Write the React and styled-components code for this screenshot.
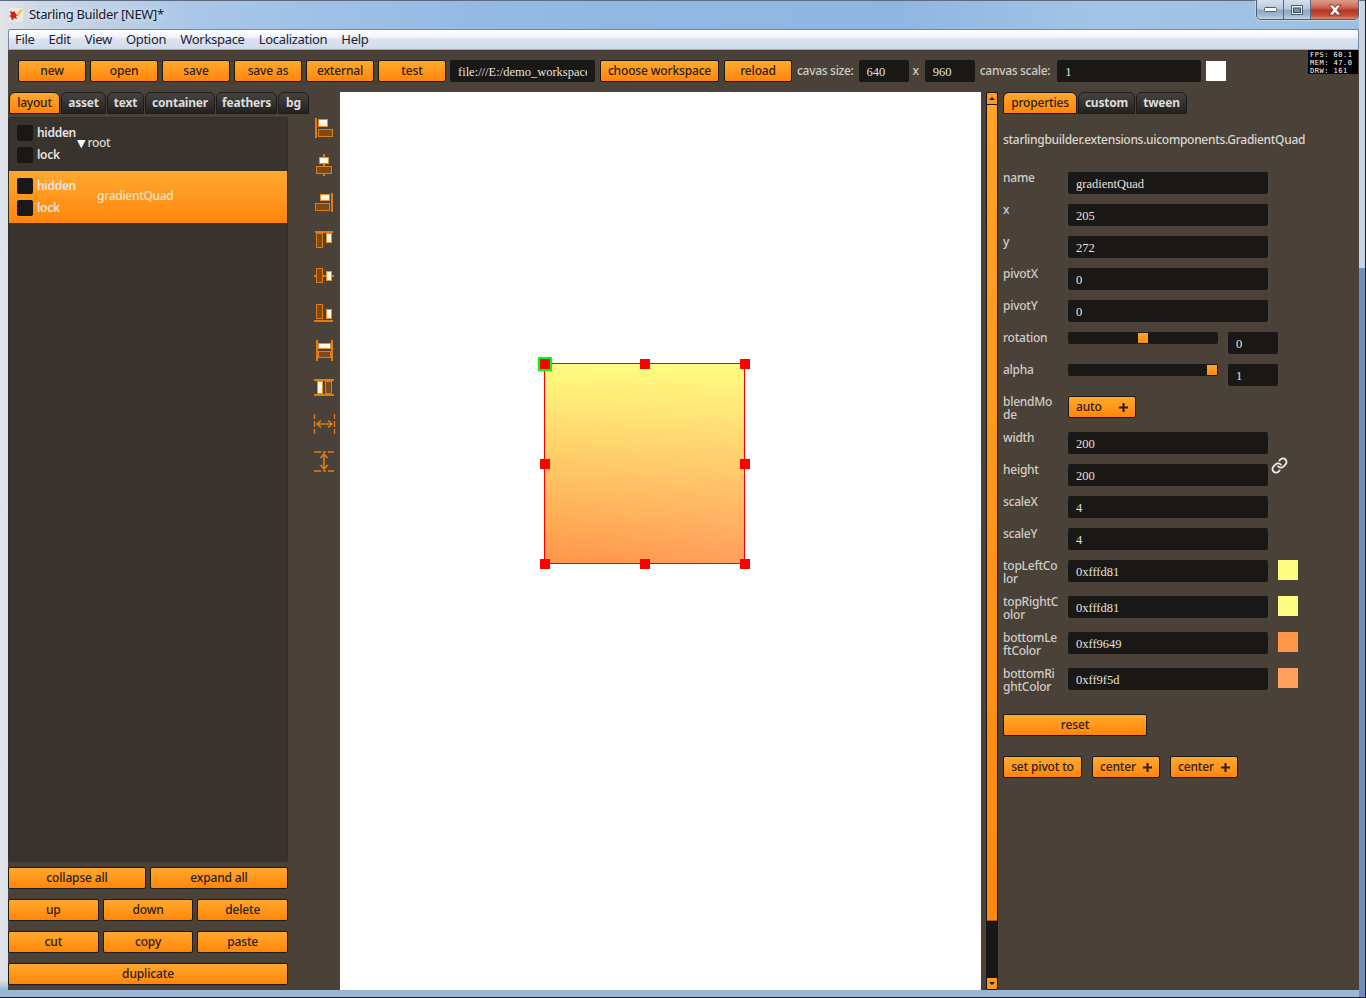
import React from "react";
import styled, { createGlobalStyle } from "styled-components";
import { Link as LinkIcon } from "lucide-react";

const Global = createGlobalStyle`
  html, body { margin: 0; padding: 0; overflow: hidden; background: #a8c3e0; }
  * { box-sizing: border-box; }
`;

const UI = `"Noto Sans", "Open Sans", sans-serif`;

const Frame = styled.div`
  width: 1366px;
  height: 998px;
  display: flex;
  flex-direction: column;
  padding: 0 7px 8px 8px;
  font-family: ${UI};
  box-shadow: inset -1px -1px 0 #1c2026, inset 0 1px 0 #5c6c7e;
  background:
    linear-gradient(to bottom, #c6d4e6 0 268px, #6f8fb8 268px) right 1px top / 6px 100% no-repeat,
    linear-gradient(to bottom, rgba(255,255,255,0) 0, rgba(255,255,255,0) 980px, #9db6d2 990px) 0 0 / 100% 100% no-repeat,
    linear-gradient(90deg, #dfe3e8 0, #cdd8e4 40px, #a8c6e8 200px, #92b9e4 500px, #8fb6e2 900px, #a3c4e6 1100px, #9dbfe2 1366px);
`;

const TitleBar = styled.div`
  height: 29px;
  flex: none;
  display: flex;
  align-items: flex-start;
  margin-left: 1px;
  position: relative;
`;

const AppIcon = styled.svg`
  width: 14px;
  height: 14px;
  margin-top: 8px;
  flex: none;
`;

const TitleText = styled.div`
  margin: 4px 0 0 6px;
  font-size: 13px;
  line-height: 20px;
  letter-spacing: -0.35px;
  color: #16202c;
  text-shadow: 0 0 6px rgba(255, 255, 255, 0.8);
`;

const Controls = styled.div`
  position: absolute;
  top: 0;
  right: 0;
  display: flex;
  height: 20px;
  border: 1px solid #50606f;
  border-top: none;
  border-radius: 0 0 5px 5px;
  overflow: hidden;
  box-shadow: 0 0 0 1px rgba(255, 255, 255, 0.35);
`;

const ControlButton = styled.div`
  width: ${(p) => p.$w}px;
  display: flex;
  align-items: center;
  justify-content: center;
  border-right: ${(p) => (p.$red ? "none" : "1px solid #55687c")};
  background: ${(p) =>
    p.$red
      ? "linear-gradient(to bottom, #dd9c8c 0, #cf6f5c 35%, #b93526 55%, #c04d3a 80%, #d98a70 100%)"
      : "linear-gradient(to bottom, #d6e0ea 0, #b8cade 45%, #8ea9c4 55%, #a6bcd2 85%, #c5d6e6 100%)"};
`;

const MenuBar = styled.div`
  height: 21px;
  flex: none;
  display: flex;
  align-items: center;
  gap: 14px;
  padding: 0 0 1px 6px;
  font-size: 13px;
  letter-spacing: -0.3px;
  color: #1a2636;
  border: 1px solid #77889e;
  border-bottom: 1px solid #9aa6ba;
  border-radius: 2px 2px 0 0;
  background: linear-gradient(to bottom, #ffffff 0, #f1f4fa 35%, #dde2f0 50%, #d3daec 100%);
`;

const Main = styled.div`
  flex: 1;
  min-height: 0;
  display: flex;
  flex-direction: column;
  position: relative;
  background: #4a4238;
`;

const Fps = styled.div`
  position: absolute;
  top: 0;
  right: 1px;
  width: 50px;
  height: 24px;
  padding: 1px 0 0 2px;
  background: #000;
  color: #fff;
  font-family: "DejaVu Sans Mono", monospace;
  font-size: 7px;
  line-height: 8px;
  letter-spacing: 0.5px;
  white-space: pre;
`;

const Toolbar = styled.div`
  height: 42px;
  flex: none;
  display: flex;
  align-items: flex-start;
  gap: 4px;
  padding: 10px 0 0 10px;
`;

const Button = styled.button`
  width: ${(p) => (p.$w ? `${p.$w}px` : "auto")};
  flex: ${(p) => (p.$grow ? "1" : "none")};
  height: 22px;
  margin-left: ${(p) => p.$ml || 0}px;
  display: flex;
  align-items: center;
  justify-content: ${(p) => (p.$split ? "space-between" : "center")};
  padding: ${(p) => (p.$split ? "0 7px" : "0")};
  border: 1px solid #1f1a14;
  border-radius: 2px;
  background: linear-gradient(to bottom, #ffa92f 0, #ff9a1e 45%, #ff850c 100%);
  color: #2b2118;
  font-family: ${UI};
  font-size: 12px;
  font-weight: 500;
  line-height: 14px;
  letter-spacing: -0.15px;
  white-space: nowrap;
`;

const Field = styled.input`
  width: ${(p) => p.$w}px;
  height: 22px;
  flex: none;
  margin-left: ${(p) => p.$ml || 0}px;
  padding: 2px 8px 0;
  border: none;
  border-radius: 2px;
  outline: none;
  background: #1a1816;
  color: #e4e2de;
  font-family: "Liberation Serif", serif;
  font-size: 12.5px;
`;

const ToolLabel = styled.span`
  margin-left: ${(p) => p.$ml || 0}px;
  margin-right: ${(p) => p.$mr || 0}px;
  color: #d0ccc6;
  font-size: 12px;
  font-weight: 500;
  line-height: 22px;
  letter-spacing: -0.3px;
  white-space: nowrap;
`;

const Swatch = styled.div`
  width: 20px;
  height: 20px;
  flex: none;
  margin-left: ${(p) => p.$ml || 0}px;
  margin-top: ${(p) => p.$mt || 0}px;
  background: ${(p) => p.$c};
`;

const Body = styled.div`
  flex: 1;
  min-height: 0;
  display: flex;
`;

const LeftPanel = styled.div`
  width: 280px;
  flex: none;
  display: flex;
  flex-direction: column;
  padding-bottom: 5px;
`;

const Tabs = styled.div`
  display: flex;
  height: 22px;
  flex: none;
  gap: 1px;
  padding-left: ${(p) => p.$pl || 0}px;
`;

const Tab = styled.div`
  width: ${(p) => p.$w}px;
  flex: none;
  display: flex;
  align-items: center;
  justify-content: center;
  padding-bottom: 2px;
  border: 1px solid #1e1b18;
  border-radius: 6px 6px 0 0;
  font-size: 12px;
  letter-spacing: -0.2px;
  font-weight: ${(p) => (p.$active ? 500 : 700)};
  color: ${(p) => (p.$active ? "#2b2118" : "#dcdcdc")};
  background: ${(p) =>
    p.$active
      ? "linear-gradient(to bottom, #ffa82e, #ff850c)"
      : "linear-gradient(to bottom, #46433f, #232120)"};
`;

const Tree = styled.div`
  flex: 1;
  min-height: 0;
  margin-top: 3px;
  display: flex;
  flex-direction: column;
  gap: 1px;
  background: #38332d;
  border: 1px solid #342f2a;
  border-radius: 2px;
`;

const TreeRow = styled.div`
  height: 52px;
  flex: none;
  display: flex;
  align-items: center;
  padding-left: 8px;
  background: ${(p) =>
    p.$selected ? "linear-gradient(to bottom, #ffa92f, #ff850c)" : "transparent"};
`;

const Checks = styled.div`
  width: 60px;
  flex: none;
  display: flex;
  flex-direction: column;
  gap: 6px;
`;

const CheckLine = styled.div`
  display: flex;
  align-items: center;
  gap: 4px;
  font-size: 12px;
  font-weight: 600;
  line-height: 16px;
  letter-spacing: -0.3px;
  color: #e6e4e0;
`;

const CheckBox = styled.span`
  width: 16px;
  height: 16px;
  border-radius: 2px;
  background: #1a1816;
`;

const NodeLabel = styled.div`
  padding-left: ${(p) => p.$indent}px;
  padding-bottom: 3px;
  font-size: 12px;
  font-weight: 500;
  letter-spacing: -0.3px;
  color: ${(p) => (p.$selected ? "#f6e3c8" : "#dcd9d4")};
  white-space: nowrap;
`;

const Triangle = styled.span`
  margin-right: 2px;
  font-family: "DejaVu Sans", sans-serif;
  font-size: 11px;
  letter-spacing: 0;
  color: #fff;
`;

const ButtonRow = styled.div`
  display: flex;
  flex: none;
  gap: 4px;
  margin-top: ${(p) => p.$mt}px;
`;

const IconColumn = styled.div`
  width: 24px;
  flex: none;
  margin-left: 25px;
  padding-top: 24px;
  display: flex;
  flex-direction: column;
  gap: 13px;
`;

const AlignSvg = styled.svg`
  width: 24px;
  height: 24px;
  display: block;
  filter: blur(0.5px);
`;

const Canvas = styled.div`
  width: 641px;
  flex: none;
  margin-left: 3px;
  position: relative;
  background: #fff;
`;

const Quad = styled.div`
  position: absolute;
  left: 204px;
  top: 271px;
  width: 201px;
  height: 201px;
  border: 1px solid #ff0000;
  background:
    linear-gradient(to bottom, #fffd81, rgba(255, 253, 129, 0)),
    linear-gradient(to right, #ff9649, #ff9f5d);
`;

const Handle = styled.div`
  position: absolute;
  left: ${(p) => p.$x - 5}px;
  top: ${(p) => p.$y - 5}px;
  width: 10px;
  height: 10px;
  background: #ff0000;
`;

const PivotMark = styled.div`
  position: absolute;
  left: -7px;
  top: -7px;
  width: 14px;
  height: 14px;
  border: 2px solid #00ff00;
`;

const ScrollBar = styled.div`
  width: 12px;
  flex: none;
  margin-left: 5px;
  display: flex;
  flex-direction: column;
  background: #1a1816;
  border: 1px solid #1a1816;
  border-radius: 2px;
  overflow: hidden;
`;

const ScrollArrow = styled.div`
  height: 11px;
  flex: none;
  display: flex;
  align-items: center;
  justify-content: center;
  background: #ff9a1e;
  &::before {
    content: "";
    border-left: 3px solid transparent;
    border-right: 3px solid transparent;
    ${(p) => (p.$up ? "border-bottom: 3px solid #1a1816;" : "border-top: 3px solid #1a1816;")}
  }
`;

const ScrollThumb = styled.div`
  height: 816px;
  flex: none;
  margin-top: 1px;
  background: linear-gradient(to bottom, #ffa226, #ff880f);
  border-bottom: 1px solid #a85a10;
`;

const ScrollRest = styled.div`
  flex: 1;
`;

const RightPanel = styled.div`
  flex: 1;
  min-width: 0;
  margin-left: 5px;
`;

const ClassName = styled.div`
  margin: 18px 0 25px;
  font-size: 12px;
  font-weight: 500;
  line-height: 15px;
  letter-spacing: -0.3px;
  color: #d8d5d0;
  white-space: nowrap;
`;

const Props = styled.div`
  display: flex;
  flex-direction: column;
  gap: 10px;
`;

const PropRow = styled.div`
  display: flex;
  align-items: flex-start;
  min-height: 22px;
`;

const PropLabel = styled.div`
  width: 65px;
  flex: none;
  margin-top: -1px;
  padding-bottom: 1px;
  font-size: 12px;
  font-weight: 500;
  line-height: 13px;
  letter-spacing: -0.25px;
  color: #d0ccc6;
  white-space: pre-line;
`;

const Slider = styled.div`
  width: 150px;
  height: 12px;
  flex: none;
  position: relative;
  border-radius: 2px;
  background: #1a1816;
`;

const SliderKnob = styled.div`
  position: absolute;
  top: 1px;
  left: ${(p) => p.$at}px;
  width: 10px;
  height: 10px;
  background: linear-gradient(to bottom, #ffa52a, #ff8a10);
`;

const LinkMark = styled(LinkIcon)`
  flex: none;
  margin: -7px 0 0 3px;
  color: #ecebe8;
`;

const Plus = styled.svg`
  width: 9px;
  height: 9px;
  flex: none;
`;

const ActionRow = styled.div`
  display: flex;
  gap: 10px;
  margin-top: ${(p) => p.$mt}px;
`;

const aligns = [
  { bars: [[2, 2, 2, 20]], light: [5, 3, 10, 8], dark: [5, 13, 15, 8] },
  { bars: [[10, 1, 2, 22]], light: [6, 4, 10, 7], dark: [3, 13, 16, 8] },
  { bars: [[18, 3, 2, 19]], light: [7, 4, 10, 7], dark: [2, 13, 15, 8] },
  { bars: [[2, 4, 18, 2]], light: [13, 6, 6, 10], dark: [3, 6, 7, 15] },
  { bars: [[1, 11, 20, 2]], light: [13, 7, 6, 10], dark: [3, 4, 7, 15] },
  { bars: [[1, 19, 19, 2]], light: [13, 8, 6, 10], dark: [3, 3, 7, 15] },
  { bars: [[3, 2, 2, 21], [18, 2, 2, 21]], light: [5, 5, 13, 6], dark: [5, 13, 13, 7] },
  { bars: [[1, 4, 20, 2], [1, 19, 20, 2]], light: [4, 6, 6, 13], dark: [12, 6, 7, 13] },
];

const AlignIcon = ({ bars, light, dark }) => (
  <AlignSvg viewBox="0 0 24 24">
    {bars.map((b, i) => (
      <rect key={i} x={b[0]} y={b[1]} width={b[2]} height={b[3]} fill="#e07c14" />
    ))}
    <rect x={dark[0] + 0.5} y={dark[1] + 0.5} width={dark[2] - 1} height={dark[3] - 1} fill="#7d4a14" stroke="#e07c14" />
    <rect x={light[0] + 0.5} y={light[1] + 0.5} width={light[2] - 1} height={light[3] - 1} fill="#fff6e4" stroke="#ee8c24" />
  </AlignSvg>
);

const DistH = () => (
  <AlignSvg viewBox="0 0 24 24" fill="none" stroke="#e07c14">
    <path d="M1.5 2v5M1.5 9v6M1.5 17v5M21.5 2v5M21.5 9v6M21.5 17v5" strokeWidth="1.3" />
    <path d="M4 12h15M8 8.5 4 12l4 3.5M15 8.5l4 3.5-4 3.5" strokeWidth="1.6" />
  </AlignSvg>
);

const DistV = () => (
  <AlignSvg viewBox="0 0 24 24" fill="none" stroke="#e07c14">
    <path d="M1 3h7M10 3h3M15 3h6M1 22h7M10 22h3M15 22h6" strokeWidth="1.3" />
    <path d="M11 5v15M7.5 9 11 5l3.5 4M7.5 16l3.5 4 3.5-4" strokeWidth="1.6" />
  </AlignSvg>
);

const PlusIcon = () => (
  <Plus viewBox="0 0 9 9">
    <path d="M3.5 0h2v3.5H9v2H5.5V9h-2V5.5H0v-2h3.5z" fill="#241c14" />
  </Plus>
);

const textRows = [
  { label: "name", value: "gradientQuad" },
  { label: "x", value: "205" },
  { label: "y", value: "272" },
  { label: "pivotX", value: "0" },
  { label: "pivotY", value: "0" },
];

const sizeRows = [
  { label: "width", value: "200" },
  { label: "height", value: "200", link: true },
  { label: "scaleX", value: "4" },
  { label: "scaleY", value: "4" },
];

const colorRows = [
  { label: "topLeftCo\nlor", value: "0xfffd81", color: "#fffd81" },
  { label: "topRightC\nolor", value: "0xfffd81", color: "#fffd81" },
  { label: "bottomLe\nftColor", value: "0xff9649", color: "#ff9649" },
  { label: "bottomRi\nghtColor", value: "0xff9f5d", color: "#ff9f5d" },
];

const handles = [
  [0, 0], [100, 0], [200, 0],
  [0, 100], [200, 100],
  [0, 200], [100, 200], [200, 200],
];

export default function App() {
  return (
    <Frame>
      <Global />
      <TitleBar>
        <AppIcon viewBox="0 0 14 14">
          <rect width="14" height="14" rx="1" fill="#efe9e2" />
          <path d="M1 3l3 1 1-1 2 3 2 2-2 0 1 3-3-1-2 3-1-4-2-1 2-1z" fill="#d3201c" />
          <path d="M7.5 7l4.5-6 1.5 1-4.5 6z" fill="#e8b824" />
        </AppIcon>
        <TitleText>Starling Builder [NEW]*</TitleText>
        <Controls>
          <ControlButton $w={27}>
            <svg width="13" height="5" viewBox="0 0 13 5">
              <rect x="0.5" y="0.5" width="12" height="4" rx="1" fill="#fff" stroke="#4d5f72" />
            </svg>
          </ControlButton>
          <ControlButton $w={27}>
            <svg width="12" height="10" viewBox="0 0 12 10">
              <rect x="0.5" y="0.5" width="11" height="9" fill="#e8eef5" stroke="#4d5f72" />
              <rect x="2.5" y="3" width="7" height="4.5" fill="#7e93aa" stroke="#3e4f60" />
            </svg>
          </ControlButton>
          <ControlButton $w={47} $red>
            <svg width="16" height="12" viewBox="0 0 16 12">
              <path d="M2 1h4l2 2.5L10 1h4l-4 5 4 5h-4L8 8.5 6 11H2l4-5z" fill="#fff" stroke="#5a2a22" strokeWidth="0.8" />
            </svg>
          </ControlButton>
        </Controls>
      </TitleBar>
      <MenuBar>
        {["File", "Edit", "View", "Option", "Workspace", "Localization", "Help"].map((m) => (
          <span key={m}>{m}</span>
        ))}
      </MenuBar>
      <Main>
        <Fps>{"FPS: 60.1\nMEM: 47.0\nDRW: 161"}</Fps>
        <Toolbar>
          {["new", "open", "save", "save as", "external", "test"].map((t) => (
            <Button key={t} $w={68}>{t}</Button>
          ))}
          <Field $w={145} readOnly value="file:///E:/demo_workspace" />
          <Button $w={119} $ml={1}>choose workspace</Button>
          <Button $w={68} $ml={1}>reload</Button>
          <ToolLabel $ml={1} $mr={1}>cavas size:</ToolLabel>
          <Field $w={50} readOnly value="640" />
          <ToolLabel $mr={2}>x</ToolLabel>
          <Field $w={50} readOnly value="960" />
          <ToolLabel $ml={1} $mr={3}>canvas scale:</ToolLabel>
          <Field $w={144} readOnly value="1" />
          <Swatch $c="#fff" $ml={1} $mt={1} />
        </Toolbar>
        <Body>
          <LeftPanel>
            <Tabs $pl={1}>
              <Tab $w={51} $active>layout</Tab>
              <Tab $w={45}>asset</Tab>
              <Tab $w={37}>text</Tab>
              <Tab $w={70}>container</Tab>
              <Tab $w={61}>feathers</Tab>
              <Tab $w={31}>bg</Tab>
            </Tabs>
            <Tree>
              <TreeRow>
                <Checks>
                  <CheckLine><CheckBox />hidden</CheckLine>
                  <CheckLine><CheckBox />lock</CheckLine>
                </Checks>
                <NodeLabel $indent={0}><Triangle>▼</Triangle>root</NodeLabel>
              </TreeRow>
              <TreeRow $selected>
                <Checks>
                  <CheckLine><CheckBox />hidden</CheckLine>
                  <CheckLine><CheckBox />lock</CheckLine>
                </Checks>
                <NodeLabel $indent={20} $selected>gradientQuad</NodeLabel>
              </TreeRow>
            </Tree>
            <ButtonRow $mt={5}>
              <Button $grow>collapse all</Button>
              <Button $grow>expand all</Button>
            </ButtonRow>
            <ButtonRow $mt={10}>
              <Button $grow>up</Button>
              <Button $grow>down</Button>
              <Button $grow>delete</Button>
            </ButtonRow>
            <ButtonRow $mt={10}>
              <Button $grow>cut</Button>
              <Button $grow>copy</Button>
              <Button $grow>paste</Button>
            </ButtonRow>
            <ButtonRow $mt={10}>
              <Button $grow>duplicate</Button>
            </ButtonRow>
          </LeftPanel>
          <IconColumn>
            {aligns.map((a, i) => (
              <AlignIcon key={i} {...a} />
            ))}
            <DistH />
            <DistV />
          </IconColumn>
          <Canvas>
            <Quad>
              {handles.map(([x, y]) => (
                <Handle key={`${x}-${y}`} $x={x} $y={y} />
              ))}
              <PivotMark />
            </Quad>
          </Canvas>
          <ScrollBar>
            <ScrollArrow $up />
            <ScrollThumb />
            <ScrollRest />
            <ScrollArrow />
          </ScrollBar>
          <RightPanel>
            <Tabs>
              <Tab $w={74} $active>properties</Tab>
              <Tab $w={57}>custom</Tab>
              <Tab $w={51}>tween</Tab>
            </Tabs>
            <ClassName>starlingbuilder.extensions.uicomponents.GradientQuad</ClassName>
            <Props>
              {textRows.map((r) => (
                <PropRow key={r.label}>
                  <PropLabel>{r.label}</PropLabel>
                  <Field $w={200} readOnly value={r.value} />
                </PropRow>
              ))}
              <PropRow>
                <PropLabel>rotation</PropLabel>
                <Slider><SliderKnob $at={70} /></Slider>
                <Field $w={50} $ml={10} readOnly value="0" />
              </PropRow>
              <PropRow>
                <PropLabel>alpha</PropLabel>
                <Slider><SliderKnob $at={139} /></Slider>
                <Field $w={50} $ml={10} readOnly value="1" />
              </PropRow>
              <PropRow>
                <PropLabel>{"blendMo\nde"}</PropLabel>
                <Button $w={68} $split>auto<PlusIcon /></Button>
              </PropRow>
              {sizeRows.map((r) => (
                <PropRow key={r.label}>
                  <PropLabel>{r.label}</PropLabel>
                  <Field $w={200} readOnly value={r.value} />
                  {r.link && <LinkMark size={17} strokeWidth={2.5} />}
                </PropRow>
              ))}
              {colorRows.map((r) => (
                <PropRow key={r.label}>
                  <PropLabel>{r.label}</PropLabel>
                  <Field $w={200} readOnly value={r.value} />
                  <Swatch $c={r.color} $ml={10} />
                </PropRow>
              ))}
            </Props>
            <ActionRow $mt={20}>
              <Button $w={144}>reset</Button>
            </ActionRow>
            <ActionRow $mt={20}>
              <Button $w={79}>set pivot to</Button>
              <Button $w={68} $split>center<PlusIcon /></Button>
              <Button $w={68} $split>center<PlusIcon /></Button>
            </ActionRow>
          </RightPanel>
        </Body>
      </Main>
    </Frame>
  );
}
